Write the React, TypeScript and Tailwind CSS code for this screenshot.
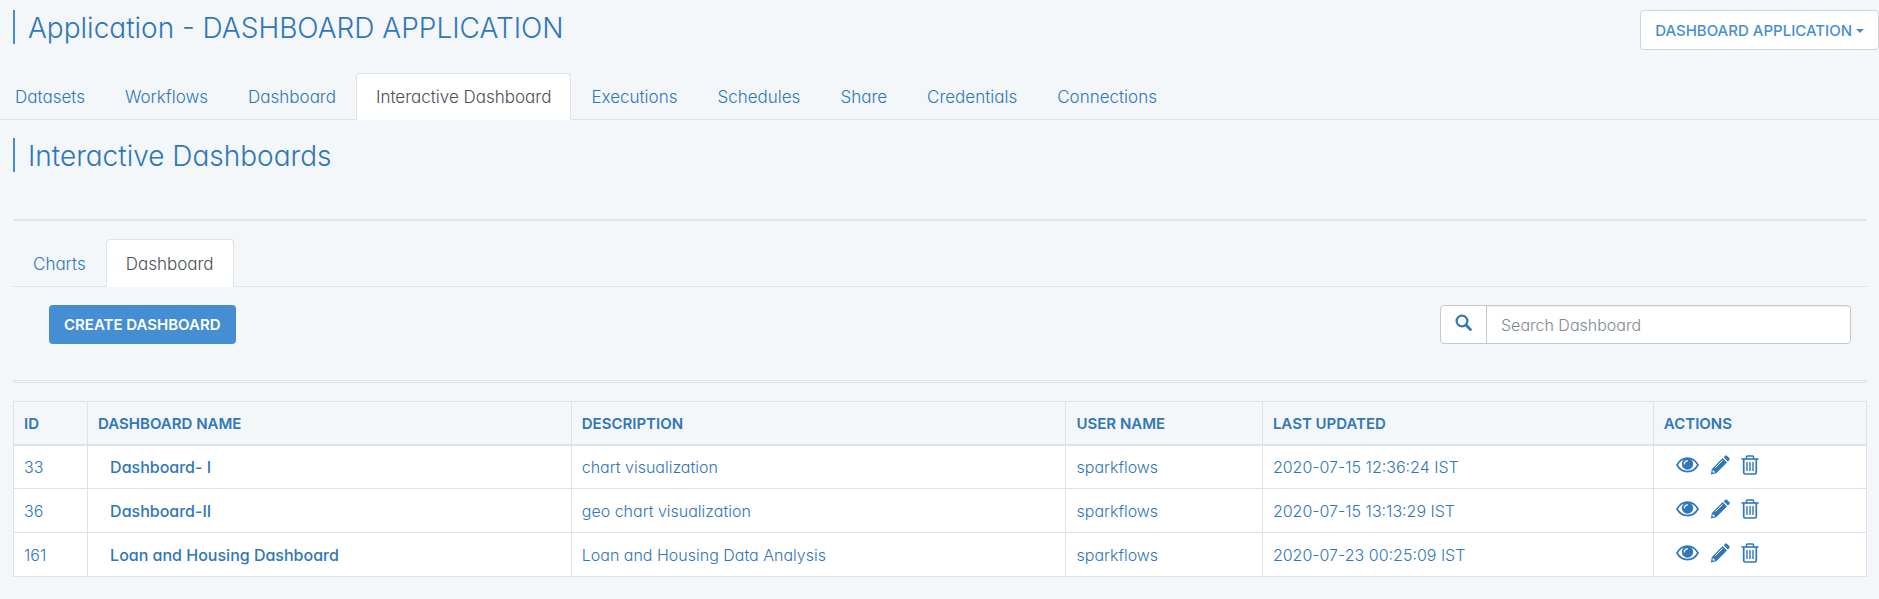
import type { ReactNode } from "react";

const appTabs = [
  "Datasets",
  "Workflows",
  "Dashboard",
  "Interactive Dashboard",
  "Executions",
  "Schedules",
  "Share",
  "Credentials",
  "Connections",
];

const dashboards = [
  { id: 33, name: "Dashboard- I", description: "chart visualization", user: "sparkflows", updated: "2020-07-15 12:36:24 IST" },
  { id: 36, name: "Dashboard-II", description: "geo chart visualization", user: "sparkflows", updated: "2020-07-15 13:13:29 IST" },
  { id: 161, name: "Loan and Housing Dashboard", description: "Loan and Housing Data Analysis", user: "sparkflows", updated: "2020-07-23 00:25:09 IST" },
];

function Tab({ active, children }: { active?: boolean; children: ReactNode }) {
  return (
    <li className="-mb-px">
      <a
        href="#"
        aria-current={active ? "page" : undefined}
        className={
          active
            ? "block rounded-t border border-[#dee2e6] border-b-white bg-white px-[19px] pt-3 pb-2.5 text-[#495057]"
            : "block border border-transparent px-[19px] pt-3 pb-2.5"
        }
      >
        {children}
      </a>
    </li>
  );
}

function Heading({ children }: { children: ReactNode }) {
  return (
    <h2 className="ml-[13px] border-l-2 border-[#468ed3] pt-0.5 pl-[13px] text-[28px] leading-8 font-light">
      {children}
    </h2>
  );
}

function SearchIcon() {
  return (
    <svg viewBox="0 0 17 17" className="size-[17px]" fill="none" stroke="currentColor" aria-hidden="true">
      <circle cx="7" cy="7" r="5.4" strokeWidth="2.2" />
      <path d="M11 11l4.4 4.4" strokeWidth="2.8" strokeLinecap="round" />
    </svg>
  );
}

function EyeIcon() {
  return (
    <svg viewBox="0 0 23 16" className="h-4 w-[23px]" aria-hidden="true">
      <path
        d="M1 8C3.4 3.8 7 1.2 11.500 1.200S19.600 3.800 22 8c-2.400 4.200-6 6.600-10.500 6.600S3.400 12.200 1 8z"
        fill="none"
        stroke="currentColor"
        strokeWidth="1.700"
      />
      <circle cx="11.500" cy="7" r="5.700" fill="currentColor" />
      <path d="M8.300 7a3.200 3.200 0 0 1 3.200-3.200" fill="none" stroke="white" strokeWidth="1.200" strokeLinecap="round" />
    </svg>
  );
}

function PencilIcon() {
  return (
    <svg viewBox="0 0 20 20" className="size-5" fill="currentColor" aria-hidden="true">
      <path d="M13.700 2.200 15.200.8c.5-.5 1.200-.5 1.700 0l2.500 2.500c.5.5.5 1.200 0 1.700l-1.500 1.500z" />
      <path d="M12.700 3.100l4.300 4.300L6.300 18.200 .8 19.400l1.100-5.500z" />
      <path d="M12.500 5.500 5.500 12.500" stroke="white" strokeWidth="1" />
      <path d="M2.900 14.900l2.400 2.400-2 .5-.9-.9z" fill="white" />
    </svg>
  );
}

function TrashIcon() {
  return (
    <svg viewBox="0 0 18 20" className="h-5 w-[18px]" fill="none" stroke="currentColor" aria-hidden="true">
      <path d="M.5 4h17" strokeWidth="1.600" />
      <path d="M5.500 4V1.800c0-.5.3-.8.800-.8h5.400c.5 0 .8.3.8.8V4" strokeWidth="1.500" />
      <path d="M2.700 4v13.500c0 .9.600 1.500 1.500 1.500h9.600c.9 0 1.500-.6 1.500-1.500V4" strokeWidth="1.700" />
      <path d="M6 7v9M9 7v9M12 7v9" strokeWidth="1.400" />
    </svg>
  );
}

export default function App() {
  const th = "border border-b-2 border-[#dee2e6] px-2.5 pt-0.5 text-left text-[15px] font-semibold";
  const td = "border border-[#dee2e6] px-2.5";
  return (
    <div className="min-h-screen bg-[#f3f7fa] font-['Inter',sans-serif] text-base font-light text-[#2f76bb] [font-feature-settings:'cv11']">
      <header className="flex items-start justify-between pt-2.5">
        <Heading>Application - DASHBOARD APPLICATION</Heading>
        <button
          type="button"
          className="flex h-10 items-center gap-1 rounded border border-[#ced4da] bg-white px-3.5 pt-0.5 text-[15px] font-medium text-[#468ed3]"
        >
          DASHBOARD APPLICATION
          <svg viewBox="0 0 8 4" className="h-1 w-2" fill="currentColor" aria-hidden="true">
            <path d="M0 0h8L4 4z" />
          </svg>
        </button>
      </header>

      <nav aria-label="Application" className="mt-[23px] border-b border-[#dee2e6]">
        <ul className="-ml-[5px] flex text-[17px] leading-[23px]">
          {appTabs.map((tab) => (
            <Tab key={tab} active={tab === "Interactive Dashboard"}>
              {tab}
            </Tab>
          ))}
        </ul>
      </nav>

      <div className="pt-[18px]">
        <Heading>Interactive Dashboards</Heading>
      </div>

      <main className="mx-3 mt-[47px] ml-[13px] border-t-2 border-[#e5e5e5] pt-[18px]">
        <nav aria-label="Interactive dashboards" className="border-b border-[#dee2e6]">
          <ul className="flex text-[17px] leading-6">
            <Tab>Charts</Tab>
            <Tab active>Dashboard</Tab>
          </ul>
        </nav>

        <div className="mt-[18px] flex items-start justify-between pr-4 pl-9">
          <button type="button" className="h-[39px] rounded bg-[#468ed3] px-[15px] pt-0.5 text-[15px] font-semibold text-white">
            CREATE DASHBOARD
          </button>
          <div className="flex h-[39px] w-[411px] overflow-hidden rounded border border-[#c8c8c8] bg-white">
            <label htmlFor="dashboard-search" className="flex w-[46px] justify-center border-r border-[#c8c8c8] pt-2">
              <SearchIcon />
            </label>
            <input
              id="dashboard-search"
              type="search"
              aria-label="Search Dashboard"
              placeholder="Search Dashboard"
              className="min-w-0 flex-1 px-3.5 font-light shadow-[inset_0_1px_1px_rgba(0,0,0,0.075)] outline-none placeholder:text-[#7f8a93]"
            />
          </div>
        </div>

        <div className="mt-9 h-[3px] border border-[#e2e4e6]" />

        <table className="mt-[18px] w-full table-fixed border-collapse">
          <colgroup>
            <col className="w-[4%]" />
            <col className="w-[26.1%]" />
            <col className="w-[26.7%]" />
            <col className="w-[10.6%]" />
            <col className="w-[21.1%]" />
            <col className="w-[11.5%]" />
          </colgroup>
          <thead>
            <tr className="h-[43px]">
              <th className={th}>ID</th>
              <th className={th}>DASHBOARD NAME</th>
              <th className={th}>DESCRIPTION</th>
              <th className={th}>USER NAME</th>
              <th className={th}>LAST UPDATED</th>
              <th className={th}>ACTIONS</th>
            </tr>
          </thead>
          <tbody className="bg-white">
            {dashboards.map((d) => (
              <tr key={d.id} className="h-11">
                <td className={td}>{d.id}</td>
                <td className={td}>
                  <a href="#" className="pl-3 font-medium">
                    {d.name}
                  </a>
                </td>
                <td className={td}>{d.description}</td>
                <td className={td}>{d.user}</td>
                <td className={td}>{d.updated}</td>
                <td className={td}>
                  <div className="flex items-center gap-[11px] pb-1 pl-3">
                    <button type="button" aria-label={`View ${d.name}`}>
                      <EyeIcon />
                    </button>
                    <button type="button" aria-label={`Edit ${d.name}`}>
                      <PencilIcon />
                    </button>
                    <button type="button" aria-label={`Delete ${d.name}`}>
                      <TrashIcon />
                    </button>
                  </div>
                </td>
              </tr>
            ))}
          </tbody>
        </table>
      </main>
    </div>
  );
}
